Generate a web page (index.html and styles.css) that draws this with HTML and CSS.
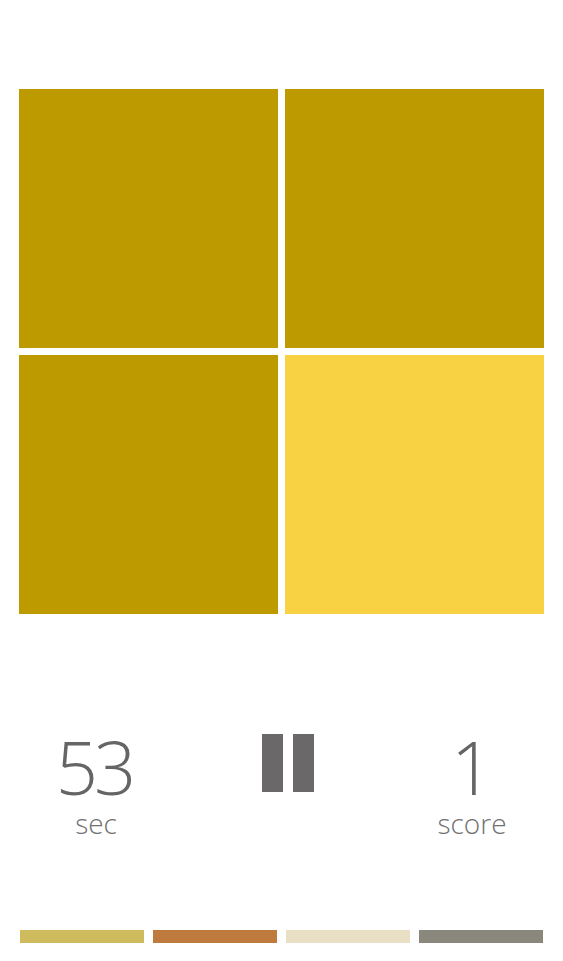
FILE: index.html
```html
<!DOCTYPE html>
<html>
<head>
<meta charset="utf-8">
<link rel="stylesheet" href="styles.css">
</head>
<body>
<div class="page">
  <div class="board">
    <div class="tile dark"></div>
    <div class="tile dark"></div>
    <div class="tile dark"></div>
    <div class="tile light"></div>
  </div>
  <div class="stats">
    <div class="stat">
      <div class="num">53</div>
      <div class="label">sec</div>
    </div>
    <div class="pause">
      <span class="bar"></span>
      <span class="bar"></span>
    </div>
    <div class="stat">
      <div class="num">1</div>
      <div class="label">score</div>
    </div>
  </div>
  <div class="palette">
    <div class="swatch s1"></div>
    <div class="swatch s2"></div>
    <div class="swatch s3"></div>
    <div class="swatch s4"></div>
  </div>
</div>
</body>
</html>
```
FILE: styles.css
```css
html, body {
  margin: 0;
  padding: 0;
  background: #ffffff;
}
.page {
  width: 563px;
  height: 961px;
  font-family: "Open Sans", "Noto Sans", sans-serif;
  color: #666566;
  overflow: hidden;
}
.board {
  display: grid;
  grid-template-columns: 259px 259px;
  grid-template-rows: 259px 259px;
  gap: 7px;
  padding: 89px 0 0 19px;
}
.tile.dark { background: #bd9a00; }
.tile.light { background: #f8d243; }
.stats {
  display: grid;
  grid-template-columns: 192px 192px 176px;
  margin-top: 116px;
  height: 200px;
}
.stat {
  display: flex;
  flex-direction: column;
  align-items: center;
}
.num {
  font-size: 74px;
  font-weight: 300;
  line-height: 74px;
  letter-spacing: -4px;
  text-indent: -4px;
}
.label {
  font-size: 28px;
  font-weight: 300;
  line-height: 30px;
  margin-top: 4px;
  color: #727172;
}
.pause {
  display: flex;
  justify-content: center;
  gap: 10px;
  padding-top: 4px;
}
.pause .bar {
  display: block;
  width: 21px;
  height: 58px;
  background: #6a6869;
}
.palette {
  display: flex;
  gap: 9px;
  padding-left: 20px;
}
.swatch {
  width: 124px;
  height: 13px;
}
.s1 { background: #cdbb5e; }
.s2 { background: #bf7b3d; }
.s3 { background: #e8dfc4; }
.s4 { background: #8a877c; }
```
